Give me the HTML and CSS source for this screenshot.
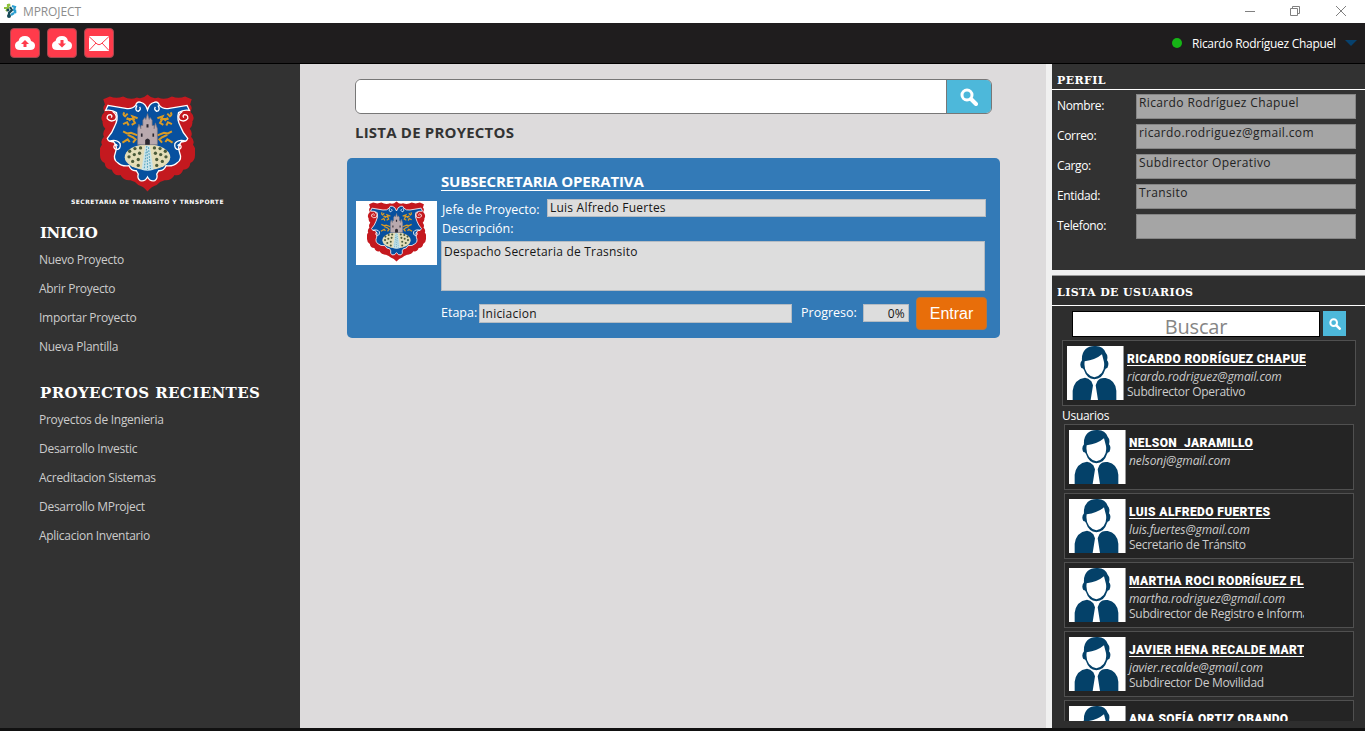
FILE: index.html
```html
<!DOCTYPE html>
<html lang="es">
<head>
<meta charset="utf-8">
<title>MPROJECT</title>
<link rel="stylesheet" href="styles.css">
</head>
<body>
<svg class="defs" aria-hidden="true">
  <defs>
    <symbol id="crest" viewBox="120 28 288 294">
      <path fill="#c4191f" d="M150 34Q170 42 190 34Q212 46 232 37Q248 44 264 28Q280 44 296 37Q316 46 338 34Q358 42 378 34L398 42L393 58Q402 68 394 80Q410 96 400 110Q402 122 392 132Q402 144 396 156Q408 168 402 180Q414 196 408 212Q408 228 394 236Q392 256 372 256Q366 276 346 272Q336 290 316 288Q300 292 292 302Q276 306 264 322Q252 306 236 302Q228 292 212 288Q192 290 182 272Q162 276 156 256Q136 256 134 236Q120 228 120 212Q114 196 126 180Q120 168 132 156Q126 144 136 132Q126 122 128 110Q118 96 134 80Q126 68 135 58L130 42Z"/>
      <g transform="translate(114 21)" stroke="#fff" stroke-width="4">
        <path fill="#07509f" d="M30 40L84 49Q104 52 114 40Q118 26 130 31Q144 34 150 54Q156 34 170 31Q182 26 186 40Q196 52 216 49L270 40L277 55Q258 52 244 62Q238 82 250 104Q256 122 272 140Q268 152 253 150Q240 164 247 182Q256 204 240 214Q228 226 206 223Q200 239 184 238L178 248Q182 262 172 268Q158 272 150 257Q142 272 128 268Q118 262 122 248L116 238Q100 239 94 223Q72 226 60 214Q44 204 53 182Q60 164 47 150Q32 152 28 140Q44 122 50 104Q62 82 56 62Q42 52 23 55Z"/>
        <path fill="none" d="M44 58Q62 72 52 84Q38 92 28 80Q26 68 38 68Q45 71 40 77M256 58Q238 72 248 84Q262 92 272 80Q274 68 262 68Q255 71 260 77M34 148Q58 142 67 156Q70 172 56 174Q44 170 50 160Q56 157 58 163M266 148Q242 142 233 156Q230 172 244 174Q256 170 250 160Q244 157 242 163M118 40Q110 56 122 58Q132 52 126 45M182 40Q190 56 178 58Q168 52 174 45"/>
      </g>
      <g fill="none" stroke="#d99b26" stroke-width="6">
        <path d="M194 82Q188 90 196 94L204 86M200 102H222L218 94L234 100M190 118L202 112L207 122M220 104L226 114L216 120M202 98L212 108"/>
        <path d="M190 140L202 146L214 144L234 152M188 174L204 164L210 172M218 156L228 164L220 174M204 150L220 158"/>
        <path d="M334 82Q340 90 332 94L324 86M328 102H306L310 94L294 100M338 118L326 112L321 122M308 104L302 114L312 120M326 98L316 108"/>
        <path d="M338 140L326 146L314 144L294 152M340 174L324 164L318 172M310 156L300 164L308 174M324 150L308 158"/>
      </g>
      <ellipse cx="264" cy="218" rx="69" ry="39" fill="#e4ddb8"/>
      <path fill="#b9a9ae" stroke="#7d747c" stroke-width="2" d="M234 180V132L238 118L244 132V122H250V106L256 98L259 104L264 86L269 104L272 98L278 106V122H284V132L288 114L294 132V180Z"/>
      <path fill="#2b2730" d="M257 180V166Q264 156 271 166V180ZM244 146h5v10h-5zM279 146h5v10h-5zM261 118h6v10h-6z"/>
      <path fill="#c9e4ea" d="M257 183H271L282 256Q264 262 246 256Z"/>
      <path fill="none" stroke="#4c9db8" stroke-width="3" stroke-dasharray="5 4" d="M262 184L254 254M267 188L273 254M263 200L264 256"/>
      <g fill="#4a5a3a">
        <circle cx="210" cy="200" r="5"/><circle cx="226" cy="192" r="5"/><circle cx="243" cy="190" r="5"/><circle cx="208" cy="217" r="5"/><circle cx="224" cy="210" r="5"/><circle cx="240" cy="206" r="5"/><circle cx="219" cy="231" r="5"/><circle cx="236" cy="225" r="5"/><circle cx="236" cy="243" r="5"/>
        <circle cx="318" cy="200" r="5"/><circle cx="302" cy="192" r="5"/><circle cx="285" cy="190" r="5"/><circle cx="320" cy="217" r="5"/><circle cx="304" cy="210" r="5"/><circle cx="288" cy="206" r="5"/><circle cx="309" cy="231" r="5"/><circle cx="292" cy="225" r="5"/><circle cx="292" cy="243" r="5"/>
      </g>
    </symbol>
    <symbol id="avatar" viewBox="0 0 168 162" preserveAspectRatio="none">
      <path fill="#fff" d="M0 0H168V162H0Z"/>
      <path fill="#044169" fill-rule="evenodd" d="M82 0Q108-1 116 20Q124 28 120 43Q128 51 121 66Q116 66 114 72Q106 99 82 100Q59 98 51 72Q49 66 43 66Q36 53 45 43Q43 22 56 9Q66 0 82 0ZM53 46Q48 84 82 94Q116 84 111 48L105 25Q85 42 53 46Z"/>
      <path fill="#044169" d="M17 162V134Q22 99 54 95Q64 96 73 106L78 118L71 162ZM93 162L86 118L91 106Q98 94 116 96Q145 102 148 134V162Z"/>
    </symbol>
    <symbol id="lens" viewBox="0 0 18 18">
      <circle cx="7" cy="7" r="5" fill="none" stroke="#fff" stroke-width="3"/>
      <path d="M11 11L16 16" stroke="#fff" stroke-width="4" stroke-linecap="round"/>
    </symbol>
    <symbol id="cloud" viewBox="0 0 20 14">
      <path fill="#fff" d="M5 14Q0 14 0 9.500Q0 6 3.500 5Q4.500 0 10 0Q15 0 16 5Q20 6 20 9.500Q20 14 15 14Z"/>
    </symbol>
  </defs>
</svg>

<div class="window">
  <header class="titlebar">
    <svg class="app-icon" width="14" height="16" viewBox="0 0 14 16">
      <g fill="none" stroke-width="2.200"><path stroke="#8fc23d" d="M1 5H5V1M3 8L6 5"/><path stroke="#174b58" d="M7 4L9 7L6 10V13"/><path stroke="#2a9ed0" d="M9 3L12 4L11 7L13 8M8 12L11 10"/></g>
      <g fill="#174b58"><circle cx="6" cy="13" r="2"/><circle cx="5" cy="7" r="1.500"/></g><circle cx="12" cy="9" r="1.500" fill="#2a9ed0"/><circle cx="6" cy="2" r="1.500" fill="#8fc23d"/>
    </svg>
    <span class="app-name">MPROJECT</span>
    <svg class="win-controls" width="104" height="12" viewBox="0 0 104 12" fill="none" stroke="#808080">
      <path d="M0 6.500H10M45.500 3.500h7v7h-7zM47.500 3V1.500h7v7H53M91 1L101 11M101 1L91 11"/>
    </svg>
  </header>

  <div class="toolbar">
    <button class="tool"><svg width="20" height="14"><use href="#cloud"/><path fill="#ff3b4b" d="M10 4L14 8H11.500V11H8.500V8H6Z"/></svg></button>
    <button class="tool"><svg width="20" height="14"><use href="#cloud"/><path fill="#ff3b4b" d="M10 11.500L6 7.500H8.500V4H11.500V7.500H14Z"/></svg></button>
    <button class="tool"><svg width="20" height="15"><path fill="#fff" d="M0 0H20V15H0Z"/><path fill="none" stroke="#ff3b4b" d="M0 .5L8 8Q10 9.500 12 8L20 .5M0 14.500L7 7M20 14.500L13 7"/></svg></button>
    <div class="account"><i class="status"></i><span class="account-name">Ricardo Rodríguez Chapuel</span><i class="caret"></i></div>
  </div>

  <div class="body">
    <nav class="sidebar">
      <svg class="shield" width="95" height="98"><use href="#crest"/></svg>
      <p class="motto">SECRETARIA DE TRANSITO Y TRNSPORTE</p>
      <h2 class="menu-title t-inicio">INICIO</h2>
      <ul class="menu"><li>Nuevo Proyecto</li><li>Abrir Proyecto</li><li>Importar Proyecto</li><li>Nueva Plantilla</li></ul>
      <h2 class="menu-title t-recent">PROYECTOS RECIENTES</h2>
      <ul class="menu"><li>Proyectos de Ingenieria</li><li>Desarrollo Investic</li><li>Acreditacion Sistemas</li><li>Desarrollo MProject</li><li>Aplicacion Inventario</li></ul>
    </nav>

    <main class="main">
      <div class="search"><div class="search-input"></div><button class="search-btn"><svg width="18" height="18"><use href="#lens"/></svg></button></div>
      <h1 class="list-title">LISTA DE PROYECTOS</h1>
      <article class="card">
        <div class="card-logo"><svg width="59" height="61"><use href="#crest"/></svg></div>
        <div class="card-info">
          <h2 class="card-title"><span>SUBSECRETARIA OPERATIVA</span></h2>
          <div class="boss"><label>Jefe de Proyecto:</label><div class="field boss-field">Luis Alfredo Fuertes</div></div>
          <label class="desc-label">Descripción:</label>
          <div class="field desc-field">Despacho Secretaria de Trasnsito</div>
          <div class="stage"><label class="stage-label">Etapa:</label><div class="field stage-field">Iniciacion</div><label class="prog-label">Progreso:</label><div class="field prog-field">0%</div><button class="enter">Entrar</button></div>
        </div>
      </article>
    </main>

    <aside class="aside">
      <section class="profile">
        <h3 class="panel-title">PERFIL</h3>
        <dl class="details">
          <dt>Nombre:</dt><dd>Ricardo Rodríguez Chapuel</dd>
          <dt>Correo:</dt><dd>ricardo.rodriguez@gmail.com</dd>
          <dt>Cargo:</dt><dd>Subdirector Operativo</dd>
          <dt>Entidad:</dt><dd>Transito</dd>
          <dt>Telefono:</dt><dd></dd>
        </dl>
      </section>
      <section class="users">
        <h3 class="panel-title users-title">LISTA DE USUARIOS</h3>
        <div class="user-search"><div class="user-input">Buscar</div><button class="user-btn"><svg width="12" height="12"><use href="#lens"/></svg></button></div>
        <div class="user me"><svg class="photo" width="57" height="54"><use href="#avatar"/></svg><div class="who"><b>RICARDO RODRÍGUEZ CHAPUE</b><em>ricardo.rodriguez@gmail.com</em><span>Subdirector Operativo</span></div></div>
        <p class="group">Usuarios</p>
        <div class="user-list">
          <div class="user"><svg class="photo" width="57" height="54"><use href="#avatar"/></svg><div class="who"><b>NELSON&nbsp; JARAMILLO</b><em>nelsonj@gmail.com</em></div></div>
          <div class="user"><svg class="photo" width="57" height="54"><use href="#avatar"/></svg><div class="who"><b>LUIS ALFREDO FUERTES</b><em>luis.fuertes@gmail.com</em><span>Secretario de Tránsito</span></div></div>
          <div class="user"><svg class="photo" width="57" height="54"><use href="#avatar"/></svg><div class="who"><b>MARTHA ROCI RODRÍGUEZ FL</b><em>martha.rodriguez@gmail.com</em><span>Subdirector de Registro e Informa</span></div></div>
          <div class="user"><svg class="photo" width="57" height="54"><use href="#avatar"/></svg><div class="who"><b>JAVIER HENA RECALDE MART</b><em>javier.recalde@gmail.com</em><span>Subdirector De Movilidad</span></div></div>
          <div class="user"><svg class="photo" width="57" height="54"><use href="#avatar"/></svg><div class="who"><b>ANA SOFÍA ORTIZ OBANDO</b></div></div>
        </div>
      </section>
    </aside>
  </div>
  <footer class="taskline"></footer>
</div>
</body>
</html>
```
FILE: styles.css
```css
* { box-sizing: border-box; margin: 0; padding: 0; }
body { font: 12px/16px "Open Sans", "Noto Sans", sans-serif; letter-spacing: -.28px; overflow: hidden; }
button { border: 0; font: inherit; }
ul { list-style: none; }
svg { display: block; flex: none; }
.defs { position: absolute; width: 0; height: 0; }
.window { width: 1365px; height: 731px; display: flex; flex-direction: column; }

.titlebar { height: 23px; flex: none; display: flex; align-items: center; padding: 0 16px 2px 3px; background: #fff; color: #8c8c8c; }
.app-name { margin-left: 6px; padding-top: 2px; letter-spacing: -.1px; }
.win-controls { margin-left: auto; }

.toolbar { height: 41px; flex: none; display: flex; align-items: center; gap: 7px; padding: 0 8px 0 10px; background: #1f1d1e; border-bottom: 1px solid #000; }
.tool { width: 30px; height: 30px; display: grid; place-items: center; background: #ff3b4b; border: 1px solid #a24850; border-radius: 4px; }
.account { margin-left: auto; display: flex; align-items: center; color: #fff; }
.status { width: 10px; height: 10px; margin-right: 10px; border-radius: 50%; background: #16b516; }
.account-name { width: 144px; padding-top: 2px; white-space: nowrap; }
.caret { margin-left: 9px; border: 6px solid transparent; border-top-color: #07416d; border-bottom: 0; }

.body { flex: 1; min-height: 0; display: flex; }
.sidebar { width: 300px; flex: none; background: #323232; padding: 30px 0 0 39px; }
.shield { margin-left: 61px; }
.motto { margin: 6px 0 0 32px; font: bold 6px/8px "DejaVu Sans", sans-serif; color: #fff; letter-spacing: .46px; white-space: nowrap; }
.menu-title { padding-left: 1px; font: bold 15px/20px "DejaVu Serif", serif; color: #fff; white-space: nowrap; }
.t-inicio { margin-top: 17px; letter-spacing: -.4px; }
.t-recent { margin-top: 22px; letter-spacing: .4px; }
.menu { margin-top: 2px; color: #ccc; }
.menu li { height: 29px; line-height: 29px; }

.main { flex: 1; background: #dddbdc; padding: 15px 0 0 47px; }
.search { display: flex; width: 637px; height: 35px; margin-left: 8px; border: 1px solid #777; border-radius: 6px; overflow: hidden; }
.search-input { flex: 1; background: #fff; }
.search-btn { width: 45px; display: grid; place-items: center; background: #4db8da; border-left: 1px solid #777; }
.list-title { margin: 8px 0 0 8px; font-size: 15px; line-height: 20px; font-weight: 700; color: #333; letter-spacing: .2px; }
.card { width: 653px; height: 180px; margin-top: 16px; display: flex; padding: 14px 0 0 9px; background: #337ab7; border-radius: 5px; color: #fff; }
.card-logo { width: 81px; height: 64px; margin: 29px 4px 0 0; display: flex; justify-content: center; background: #fff; }
.card-info { flex: none; width: 550px; }
.card-title { width: 489px; height: 19px; border-bottom: 1px solid #fff; font-size: 15px; line-height: 18px; font-weight: 700; letter-spacing: -.15px; }
.card label { font-size: 12.5px; letter-spacing: 0; }
.field { background: #ddd; border: 1px solid #b5bcc3; color: #151515; padding-left: 2px; white-space: nowrap; letter-spacing: .22px; }
.boss { display: flex; align-items: center; height: 18px; margin-top: 8px; }
.boss label { width: 106px; padding: 4px 0 0 1px; white-space: nowrap; }
.boss-field { width: 439px; height: 18px; line-height: 15px; }
.desc-label { display: block; height: 18px; line-height: 18px; padding-left: 1px; margin: 3px 0 3px; }
.desc-field { width: 544px; height: 50px; line-height: 20px; }
.stage { display: flex; align-items: center; height: 34px; margin-top: 5px; }
.stage-label { width: 38px; }
.stage-field { width: 313px; height: 19px; line-height: 17px; }
.prog-label { width: 71px; padding-left: 9px; }
.prog-field { width: 46px; height: 18px; line-height: 17px; padding-right: 3px; text-align: right; }
.enter { width: 71px; height: 33px; margin-left: 7px; background: #e86e0a; border: 1px solid #b9763c; border-radius: 4px; color: #fff; font: 16px/31px "Liberation Sans", sans-serif; letter-spacing: 0; }

.aside { width: 319px; flex: none; padding: 0 0 0 6px; background: #f0f0f0; display: flex; flex-direction: column; gap: 5px; }
.profile, .users { background: #323232; color: #fff; }
.profile { height: 206px; }
.users { flex: 1; min-height: 0; background: #2e2e2e; border-top: 1px solid #999; }
.panel-title { height: 26px; padding: 9px 0 0 5px; border-bottom: 1px solid #fff; font: bold 11px/16px "DejaVu Serif", serif; letter-spacing: .4px; }
.users-title { height: 30px; }
.details { display: grid; grid-template-columns: 79px 220px; row-gap: 5px; margin: 4px 0 0 5px; }
.details dt { height: 25px; line-height: 24px; letter-spacing: -.35px; }
.details dd { height: 25px; line-height: 15px; background: #a5a5a5; border: 1px solid #858585; padding-left: 2px; color: #222; letter-spacing: .37px; }
.user-search { display: flex; gap: 3px; margin: 5px 0 0 20px; }
.user-input { width: 248px; height: 26px; background: #fff; border: 1px solid #000; color: #858585; font-size: 20px; line-height: 30px; text-align: center; letter-spacing: -.2px; }
.user-btn { width: 23px; height: 25px; display: grid; place-items: center; background: #4db8da; }
.user { height: 66px; width: 290px; display: flex; padding: 5px 0 0 4px; background: #242424; border: 1px solid #505050; }
.me { width: 294px; margin: 3px 0 0 10px; }
.photo { border-right: 1px solid #999; }
.who { width: 178px; padding: 4px 0 0 3px; overflow: hidden; white-space: nowrap; color: #ccc; line-height: 15px; }
.who b, .who em, .who span { display: block; }
.who em { letter-spacing: -.1px; }
.who b { font: 900 12px/19px Roboto, sans-serif; height: 19px; color: #fff; text-decoration: underline; text-underline-offset: 2px; letter-spacing: .38px; }
.me .who { width: 182px; }
.group { height: 18px; line-height: 20px; margin-left: 10px; }
.user-list { height: 297px; margin: 0 0 0 12px; display: flex; flex-direction: column; gap: 3px; overflow: hidden; }
.user-list .user { flex: none; }
.taskline { height: 3px; flex: none; background: #111; }
```
